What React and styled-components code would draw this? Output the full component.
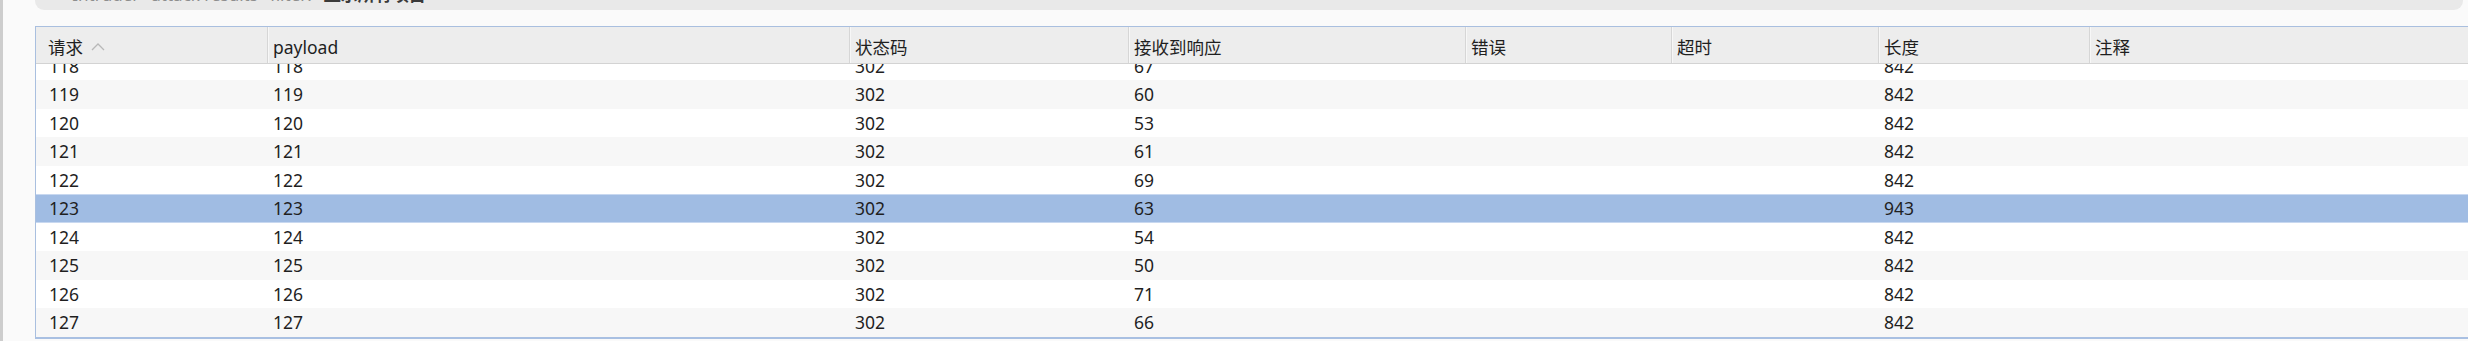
import React from "react";
import styled, { createGlobalStyle } from "styled-components";

const Global = createGlobalStyle`
  html, body { margin: 0; padding: 0; background: #fafafa; overflow: hidden; }
  * { box-sizing: border-box; }
`;

const COLS = "231px 582px 279px 337px 206px 207px 211px 1fr";

const Page = styled.div`
  display: flex;
  width: 2468px;
  height: 341px;
  background: #fafafa;
  font-family: "Noto Sans", "Noto Sans CJK SC", sans-serif;
  font-size: 17.5px;
  color: #1f1f1f;
  overflow: hidden;
`;

const EdgeStrip = styled.div`
  width: 3px;
  flex: none;
  background: #cdcdcd;
`;

const Content = styled.div`
  flex: 1;
  display: flex;
  flex-direction: column;
  padding-left: 32px;
  min-width: 0;
`;

const TopBar = styled.div`
  height: 30px;
  margin-top: -20px;
  margin-right: 5px;
  background: #e9e9e9;
  border-radius: 0 0 9px 9px;
  display: flex;
  align-items: flex-end;
  padding: 0 0 5px 20px;
  gap: 12px;
  font-size: 17px;
  line-height: 20px;
  overflow: hidden;
  white-space: nowrap;
`;

const Crumb = styled.span`
  color: ${(p) => (p.$strong ? "#3a3a3a" : "#8e8e8e")};
  font-weight: ${(p) => (p.$strong ? 700 : 400)};
`;

const Table = styled.div`
  margin-top: 16px;
  border-left: 1px solid #a9bfdf;
  border-top: 1px solid #a9bfdf;
  border-bottom: 2px solid #a9c0e2;
  display: flex;
  flex-direction: column;
  height: 313px;
`;

const HeaderRow = styled.div`
  display: grid;
  grid-template-columns: ${COLS};
  height: 37px;
  background: #ededed;
  border-bottom: 1px solid #d3d3d3;
  flex: none;
  position: relative;
  z-index: 1;
`;

const HeaderCell = styled.div`
  display: flex;
  align-items: center;
  gap: 8px;
  padding: 3px 0 0 ${(p) => (p.$first ? "12px" : "5px")};
  border-left: ${(p) => (p.$first ? "none" : "1px solid #d6d6d6")};
  box-shadow: ${(p) => (p.$first ? "none" : "inset 1px 0 0 #f7f7f7")};
  white-space: nowrap;
`;

const Body = styled.div`
  flex: 1;
  overflow: hidden;
  background: #ffffff;
`;

const Rows = styled.div`
  margin-top: -12.5px;
`;

const Row = styled.div`
  display: grid;
  grid-template-columns: ${COLS};
  height: 28.5px;
  align-items: center;
  background: ${(p) => (p.$selected ? "#a0bce3" : p.$alt ? "#f7f7f7" : "#ffffff")};
  box-shadow: ${(p) =>
    p.$selected ? "inset 0 1px 0 #c8d8f0, inset 0 -1px 0 #c8d8f0" : "none"};
`;

const Cell = styled.div`
  padding-left: ${(p) => (p.$first ? "13px" : "6px")};
  white-space: nowrap;
  line-height: 28px;
`;

const SortIcon = () => (
  <svg width="14" height="9" viewBox="0 0 14 9" fill="none">
    <path d="M1 8 L7 2 L13 8" stroke="#b8b8b8" strokeWidth="1.3" />
  </svg>
);

const headers = ["请求", "payload", "状态码", "接收到响应", "错误", "超时", "长度", "注释"];

const data = [
  [118, 67, 842],
  [119, 60, 842],
  [120, 53, 842],
  [121, 61, 842],
  [122, 69, 842],
  [123, 63, 943],
  [124, 54, 842],
  [125, 50, 842],
  [126, 71, 842],
  [127, 66, 842],
];

export default function App() {
  return (
    <>
      <Global />
      <Page>
        <EdgeStrip />
        <Content>
          <TopBar>
            <Crumb>‹</Crumb>
            <Crumb>Intruder</Crumb>
            <Crumb>attack results</Crumb>
            <Crumb>filter:</Crumb>
            <Crumb $strong>显示所有项目</Crumb>
          </TopBar>
          <Table>
            <HeaderRow>
              {headers.map((h, i) => (
                <HeaderCell key={h} $first={i === 0}>
                  {h}
                  {i === 0 && <SortIcon />}
                </HeaderCell>
              ))}
            </HeaderRow>
            <Body>
              <Rows>
                {data.map(([n, resp, len]) => (
                  <Row key={n} $alt={n % 2 === 1} $selected={n === 123}>
                    <Cell $first>{n}</Cell>
                    <Cell>{n}</Cell>
                    <Cell>302</Cell>
                    <Cell>{resp}</Cell>
                    <Cell></Cell>
                    <Cell></Cell>
                    <Cell>{len}</Cell>
                    <Cell></Cell>
                  </Row>
                ))}
              </Rows>
            </Body>
          </Table>
        </Content>
      </Page>
    </>
  );
}
